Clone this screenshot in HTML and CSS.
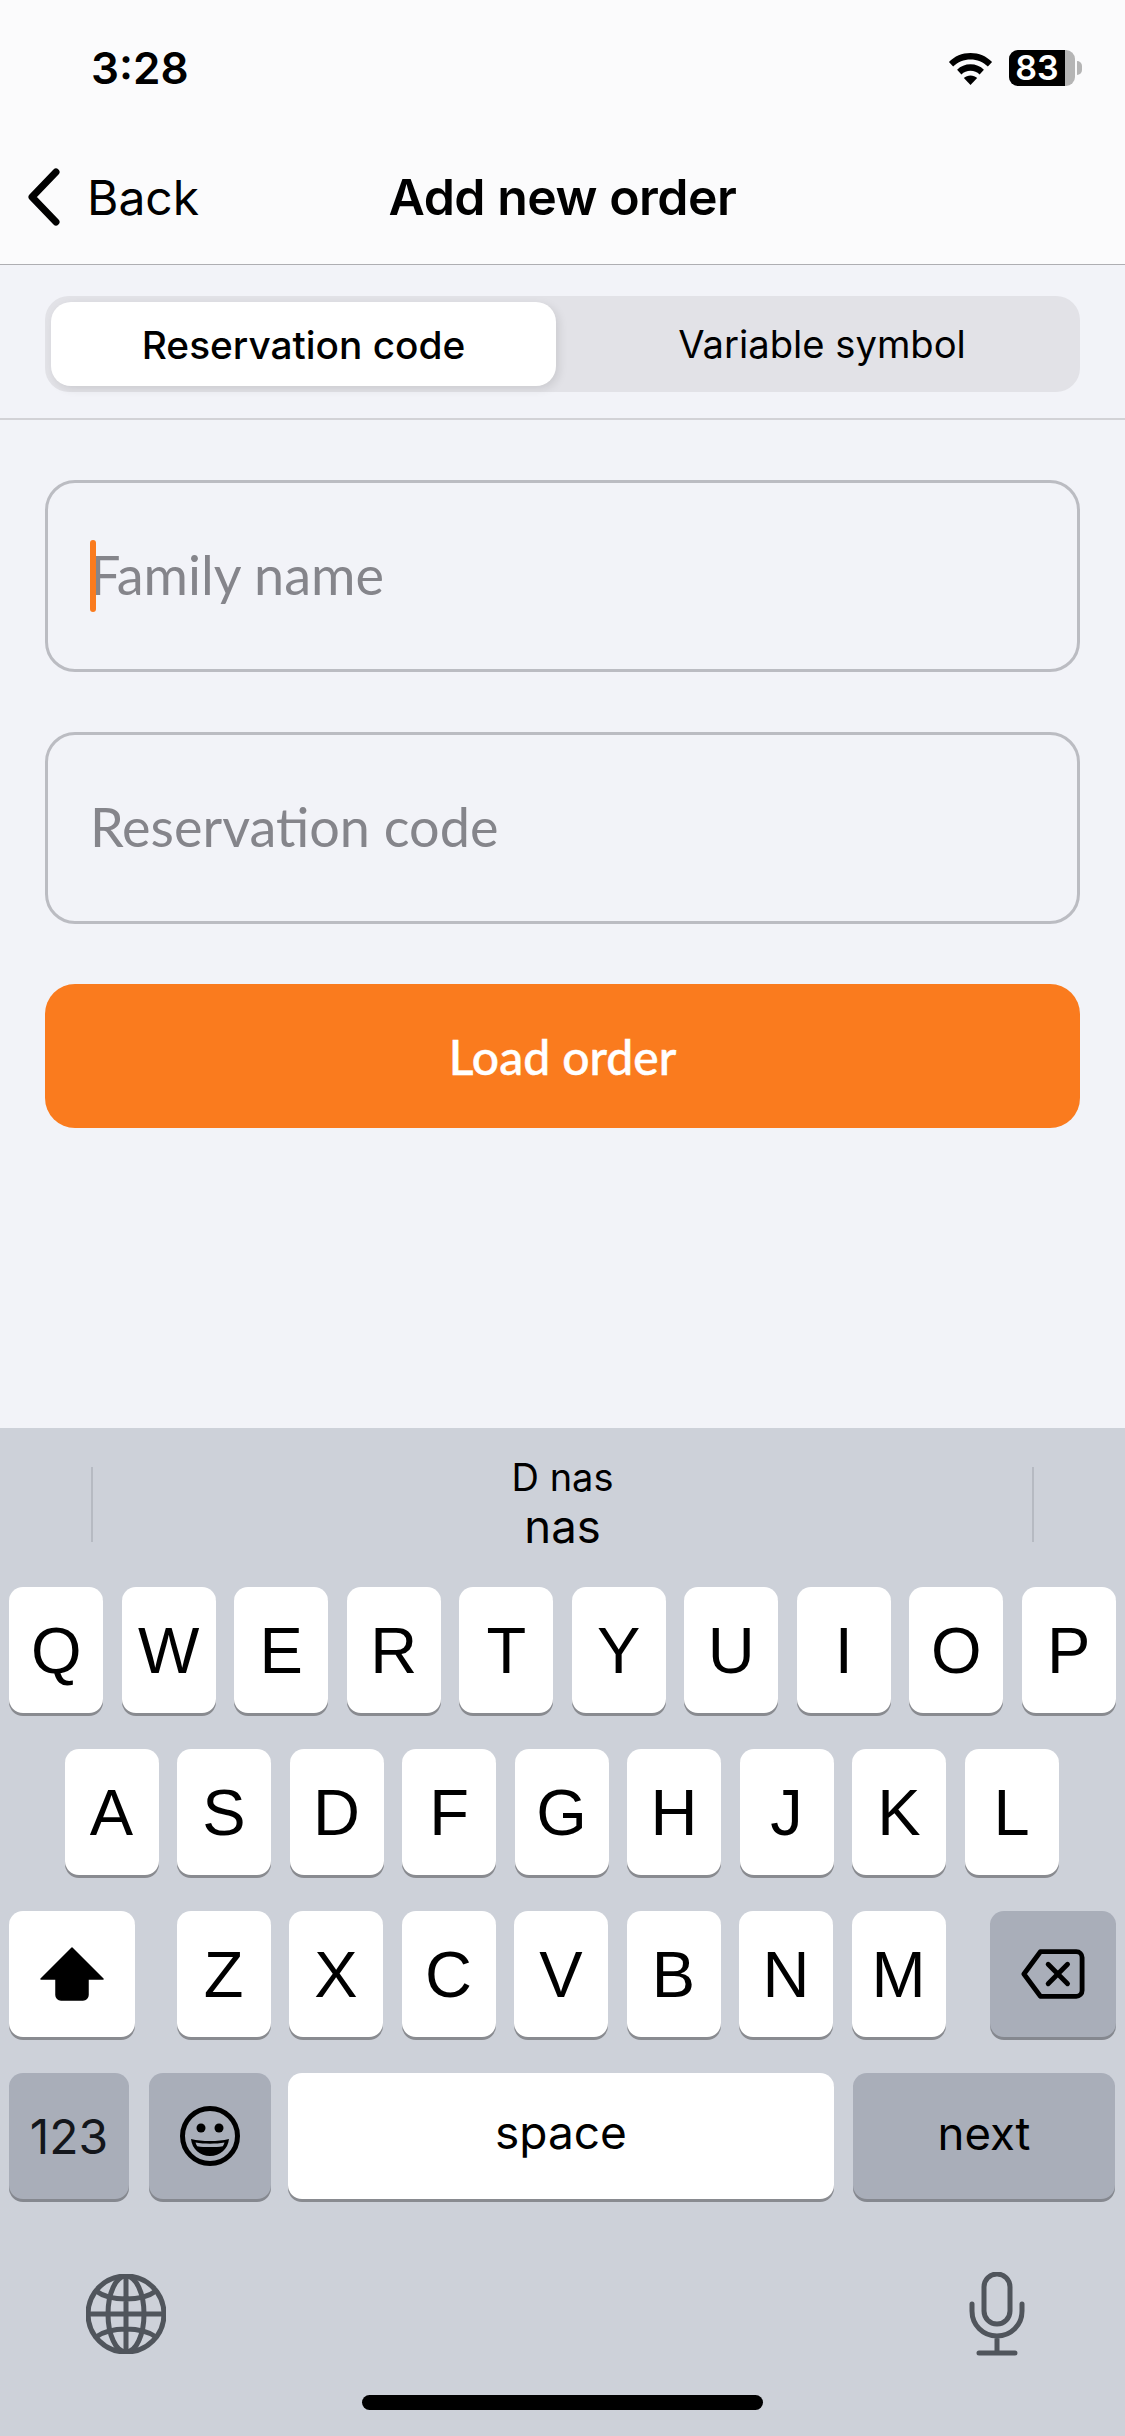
FILE: index.html
```html
<!doctype html>
<html>
<head>
<meta charset="utf-8">
<link rel="stylesheet" href="styles.css">
<title>Add new order</title>
</head>
<body>
<div class="screen">
  <header class="top">
    <div class="status">
      <span class="time">3:28</span>
      <div class="status-icons">
        <svg class="wifi" viewBox="0 0 48 36"><path d="M24 2C15 2 7 5.500 1 11.500l4.500 5C10.500 11.500 17 8.800 24 8.800s13.500 2.700 18.500 7.700l4.500-5C41 5.500 33 2 24 2z"/><path d="M24 14c-5.500 0-10.500 2.100-14.300 5.800l4.600 5C16.900 22.300 20.300 21 24 21s7.100 1.300 9.700 3.800l4.600-5C34.500 16.100 29.500 14 24 14z"/><path d="M24 26c-2.700 0-5.200 1-7.100 2.700L24 36l7.100-7.300C29.200 27 26.700 26 24 26z"/></svg>
        <div class="battery">
          <div class="battery-body"><span class="battery-fill">83</span></div>
          <span class="battery-tip"></span>
        </div>
      </div>
    </div>
    <nav class="nav">
      <a class="back">
        <svg class="chevron" viewBox="0 0 34 58"><path d="M29 4L5 29l24 25"/></svg>
        <span>Back</span>
      </a>
      <h1>Add new order</h1>
    </nav>
  </header>

  <section class="tabs">
    <div class="segmented">
      <div class="segment active">Reservation code</div>
      <div class="segment">Variable symbol</div>
    </div>
  </section>

  <main class="form">
    <div class="field"><span class="caret"></span><span class="placeholder">Family name</span></div>
    <div class="field"><span class="placeholder">Reservation code</span></div>
    <div class="submit">Load order</div>
  </main>

  <section class="keyboard">
    <div class="suggestions">
      <span class="divider"></span>
      <div class="suggestion">
        <span class="sug-small">D nas</span>
        <span class="sug-big">nas</span>
      </div>
      <span class="divider"></span>
    </div>
    <div class="keys">
      <div class="row">
        <div class="key">Q</div><div class="key">W</div><div class="key">E</div><div class="key">R</div><div class="key">T</div><div class="key">Y</div><div class="key">U</div><div class="key">I</div><div class="key">O</div><div class="key">P</div>
      </div>
      <div class="row row-middle">
        <div class="key">A</div><div class="key">S</div><div class="key">D</div><div class="key">F</div><div class="key">G</div><div class="key">H</div><div class="key">J</div><div class="key">K</div><div class="key">L</div>
      </div>
      <div class="row row-split">
        <div class="key wide">
          <svg class="shift" viewBox="0 0 64 54"><path d="M32 1L63 32H48V48a5 5 0 0 1-5 5H21a5 5 0 0 1-5-5V32H1z" stroke="#000" stroke-width="1.500" stroke-linejoin="round"/></svg>
        </div>
        <div class="letters">
          <div class="key">Z</div><div class="key">X</div><div class="key">C</div><div class="key">V</div><div class="key">B</div><div class="key">N</div><div class="key">M</div>
        </div>
        <div class="key wide gray">
          <svg class="delete" viewBox="0 0 66 52"><path d="M20 3H57a6 6 0 0 1 6 6V43a6 6 0 0 1-6 6H20L3 26z"/><path d="M28 16l20 20M48 16L28 36"/></svg>
        </div>
      </div>
      <div class="row row-bottom">
        <div class="key gray num">123</div>
        <div class="key gray emoji">
          <svg viewBox="0 0 60 60"><circle class="face" cx="30" cy="30" r="27.500"/><circle cx="21" cy="22" r="4.500"/><circle cx="39" cy="22" r="4.500"/><path d="M11 33c6 1.500 12 2 19 2s13-.5 19-2c-1 10-9 17-19 17s-18-7-19-17z"/><path class="teeth" d="M15.500 36.500c4.500.8 9 1.200 14.500 1.200s10-.4 14.500-1.200c-.4 1.300-1 2.600-1.700 3.700-4 .6-8 .9-12.800.9s-8.800-.3-12.800-.9c-.7-1.100-1.300-2.400-1.700-3.700z"/></svg>
        </div>
        <div class="key space">space</div>
        <div class="key gray next">next</div>
      </div>
    </div>
    <div class="tools">
      <svg class="globe" viewBox="0 0 80 80"><circle cx="40" cy="40" r="38"/><ellipse cx="40" cy="40" rx="18" ry="38"/><path d="M40 2V78M2 40H78M10 17c8 6 18 8 30 8s22-2 30-8M10 63c8-6 18-8 30-8s22 2 30 8"/></svg>
      <svg class="mic" viewBox="0 0 56 84"><rect x="15" y="2" width="26" height="50" rx="13"/><path d="M3 32v7c0 14 11 25 25 25s25-11 25-25v-7M28 64V81M10 81H46"/></svg>
    </div>
    <div class="home-bar"></div>
  </section>
</div>
</body>
</html>
```

FILE: styles.css
```css
html,
body {
    margin: 0;
    padding: 0;
}
body {
    font-family: Inter, "Liberation Sans", sans-serif;
    color: #000;
    background: #f2f3f8;
}
.screen {
    width: 1125px;
    height: 2436px;
    display: flex;
    flex-direction: column;
    overflow: hidden;
}

/* top bar */
.top {
    height: 264px;
    background: #fbfbfc;
    border-bottom: 1px solid #aeaeb2;
    display: flex;
    flex-direction: column;
}
.status {
    display: flex;
    justify-content: space-between;
    align-items: center;
    height: 68px;
    padding: 34px 43px 0 91px;
}
.time {
    font-size: 44px;
    font-weight: 600;
}
.status-icons {
    display: flex;
    align-items: center;
    gap: 16px;
}
.wifi {
    width: 45px;
    height: 34px;
}
.battery {
    display: flex;
    align-items: center;
    gap: 2px;
}
.battery-body {
    width: 66px;
    height: 36px;
    background: #b5b5b5;
    border-radius: 9px;
}
.battery-fill {
    display: block;
    width: 56px;
    height: 36px;
    background: #000;
    color: #fff;
    font-size: 34px;
    font-weight: 600;
    line-height: 36px;
    text-align: center;
    border-radius: 9px 0 0 9px;
}
.battery-tip {
    width: 5px;
    height: 14px;
    background: #b5b5b5;
    border-radius: 0 5px 5px 0;
}
.nav {
    flex: 1;
    display: flex;
    align-items: center;
    justify-content: center;
    position: relative;
    padding-top: 28px;
}
.nav h1 {
    margin: 0;
    font-size: 50px;
    font-weight: 600;
    letter-spacing: -0.5px;
}
.back {
    position: absolute;
    left: 27px;
    top: 28px;
    bottom: 0;
    display: flex;
    align-items: center;
    gap: 26px;
    font-size: 48px;
}
.chevron {
    width: 34px;
    height: 58px;
    fill: none;
    stroke: #000;
    stroke-width: 7;
    stroke-linecap: round;
    stroke-linejoin: round;
}

/* segmented control */
.tabs {
    height: 155px;
    box-sizing: border-box;
    padding: 31px 45px 0;
    border-bottom: 2px solid #d2d2d6;
}
.segmented {
    display: flex;
    height: 96px;
    box-sizing: border-box;
    padding: 6px 0 6px 6px;
    background: #e2e2e7;
    border-radius: 24px;
}
.segment {
    flex: 1;
    display: flex;
    align-items: center;
    justify-content: center;
    padding-left: 8px;
    font-size: 38.2px;
    font-weight: 400;
}
.segment.active {
    flex: 0 0 505px;
    padding-left: 0;
    background: #fff;
    border-radius: 20px;
    font-size: 38.8px;
    font-weight: 500;
    box-shadow: 3px 3px 10px rgba(0, 0, 0, 0.1);
}

/* form */
.form {
    display: flex;
    flex-direction: column;
    gap: 60px;
    padding: 60px 45px 0;
    font-family: Lato, sans-serif;
}
.field {
    position: relative;
    height: 192px;
    box-sizing: border-box;
    border: 3px solid #bbbcc2;
    border-radius: 30px;
    display: flex;
    align-items: center;
    padding: 0 0 3px 42px;
}
.placeholder {
    font-size: 54px;
    color: #85858b;
}
.caret {
    position: absolute;
    left: 42px;
    top: 57px;
    width: 6px;
    height: 72px;
    background: #fa7b1e;
    border-radius: 3px;
}
.submit {
    height: 144px;
    background: #fa7b1e;
    border-radius: 30px;
    color: #fff;
    font-size: 48px;
    font-weight: 500;
    -webkit-text-stroke: 0.5px #fff;
    display: flex;
    align-items: center;
    justify-content: center;
}

/* keyboard */
.keyboard {
    margin-top: auto;
    height: 1008px;
    background: #cdd1d9;
    display: flex;
    flex-direction: column;
}
.suggestions {
    height: 159px;
    box-sizing: border-box;
    padding: 28px 91px 0;
    display: flex;
    justify-content: space-between;
    align-items: flex-start;
}
.divider {
    width: 2px;
    height: 75px;
    margin-top: 11px;
    background: #b6bac2;
}
.suggestion {
    display: flex;
    flex-direction: column;
    align-items: center;
}
.sug-small {
    font-size: 38px;
    line-height: 42px;
}
.sug-big {
    font-size: 45.5px;
    line-height: 58px;
}
.keys {
    display: flex;
    flex-direction: column;
    gap: 36px;
}
.row {
    display: flex;
    justify-content: center;
    gap: 18.5px;
}
.row-middle {
    padding-right: 2px;
}
.row-split {
    justify-content: space-between;
    padding: 0 9px;
}
.letters {
    display: flex;
    gap: 18.5px;
    margin-right: 3px;
}
.key {
    width: 94px;
    height: 126px;
    background: #fff;
    border-radius: 14px;
    box-shadow: 0 3px 0 #898b90;
    font-family: "Liberation Sans", sans-serif;
    font-size: 65px;
    display: flex;
    align-items: center;
    justify-content: center;
}
.wide {
    width: 126px;
}
.gray {
    background: #a9aeb9;
    box-shadow: 0 3px 0 #85888f;
}
.row-bottom {
    justify-content: flex-start;
    padding-left: 9px;
    gap: 19px;
}
.num {
    width: 120px;
    font-family: Inter, sans-serif;
    font-size: 48px;
    color: #14171c;
}
.emoji {
    width: 122px;
    margin-right: -2px;
    margin-left: 1px;
}
.emoji svg {
    width: 60px;
    height: 60px;
}
.face {
    fill: none;
    stroke: #000;
    stroke-width: 5;
}
.teeth {
    fill: #a9aeb9;
}
.space {
    width: 546px;
    box-sizing: border-box;
    padding-bottom: 8px;
    font-family: Inter, sans-serif;
    font-size: 46px;
}
.next {
    width: 262px;
    box-sizing: border-box;
    padding-bottom: 6px;
    font-family: Inter, sans-serif;
    font-size: 45.5px;
}
.shift {
    width: 64px;
    height: 54px;
}
.delete {
    width: 64px;
    height: 52px;
    fill: none;
    stroke: #000;
    stroke-width: 5;
    stroke-linecap: round;
    stroke-linejoin: round;
}
.tools {
    display: flex;
    justify-content: space-between;
    align-items: center;
    padding: 73px 100px 0 86px;
}
.globe,
.mic {
    fill: none;
    stroke: #50555c;
    stroke-width: 5;
    stroke-linecap: round;
}
.globe {
    width: 80px;
    height: 80px;
}
.mic {
    width: 56px;
    height: 84px;
}
.home-bar {
    width: 401px;
    height: 15px;
    margin: 39px auto 0;
    background: #000;
    border-radius: 8px;
}
```
